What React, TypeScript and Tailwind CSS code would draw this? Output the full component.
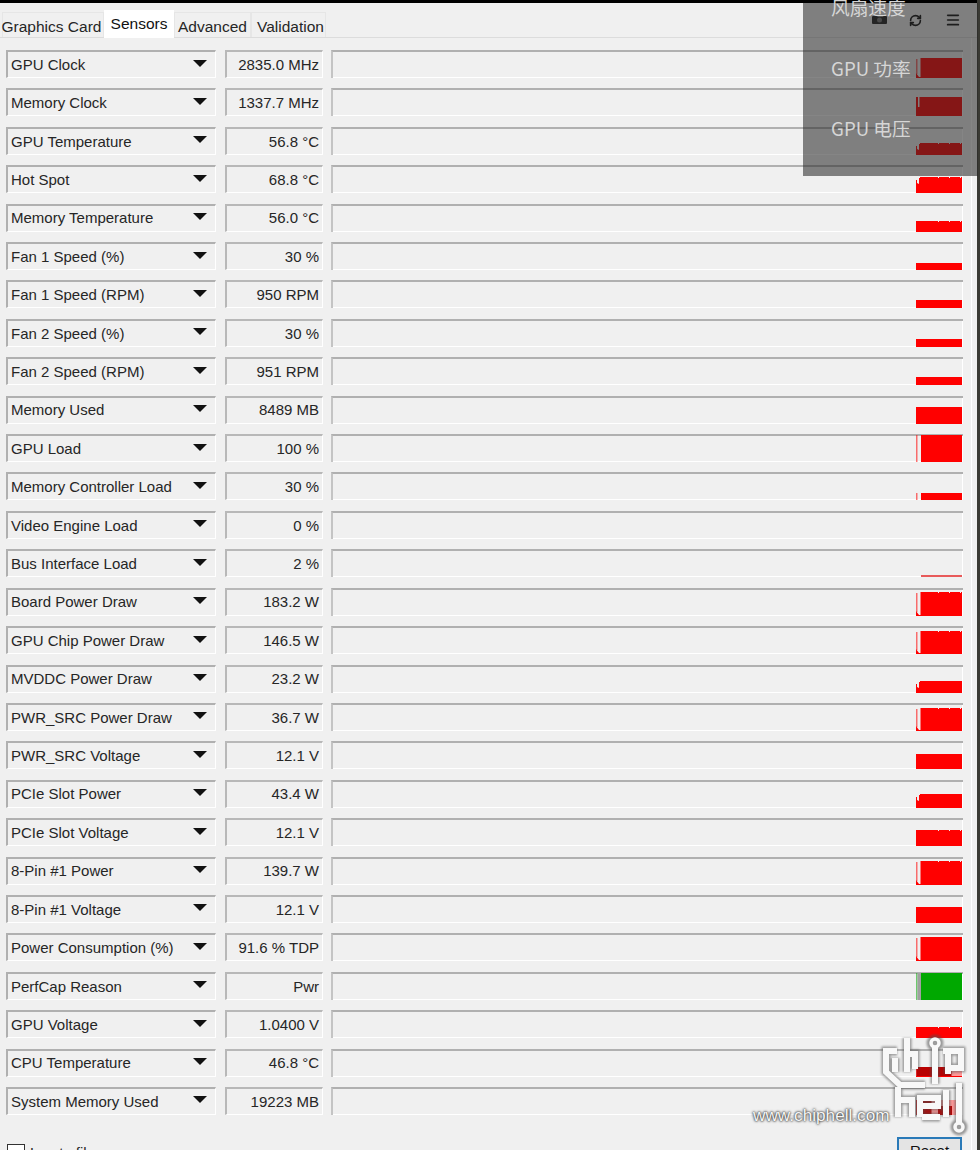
import { Menu, RefreshCw } from "lucide-react";

type Sensor = {
  name: string;
  value: string;
  h: number;
  notch?: "spike" | "short" | "gap" | "low";
  ragged?: boolean;
  color?: string;
};

const sensors: Sensor[] = [
  { name: "GPU Clock", value: "2835.0 MHz", h: 20, notch: "spike" },
  { name: "Memory Clock", value: "1337.7 MHz", h: 19, notch: "short" },
  { name: "GPU Temperature", value: "56.8 °C", h: 12, notch: "low", ragged: true },
  { name: "Hot Spot", value: "68.8 °C", h: 16, notch: "low", ragged: true },
  { name: "Memory Temperature", value: "56.0 °C", h: 11, ragged: true },
  { name: "Fan 1 Speed (%)", value: "30 %", h: 7 },
  { name: "Fan 1 Speed (RPM)", value: "950 RPM", h: 8 },
  { name: "Fan 2 Speed (%)", value: "30 %", h: 8 },
  { name: "Fan 2 Speed (RPM)", value: "951 RPM", h: 8 },
  { name: "Memory Used", value: "8489 MB", h: 17 },
  { name: "GPU Load", value: "100 %", h: 27, notch: "gap" },
  { name: "Memory Controller Load", value: "30 %", h: 7, notch: "gap" },
  { name: "Video Engine Load", value: "0 %", h: 0 },
  { name: "Bus Interface Load", value: "2 %", h: 2, notch: "gap", color: "#e85a5a" },
  { name: "Board Power Draw", value: "183.2 W", h: 24, notch: "spike", ragged: true },
  { name: "GPU Chip Power Draw", value: "146.5 W", h: 23, notch: "spike", ragged: true },
  { name: "MVDDC Power Draw", value: "23.2 W", h: 12, notch: "low" },
  { name: "PWR_SRC Power Draw", value: "36.7 W", h: 23, notch: "spike", ragged: true },
  { name: "PWR_SRC Voltage", value: "12.1 V", h: 15 },
  { name: "PCIe Slot Power", value: "43.4 W", h: 14, notch: "low" },
  { name: "PCIe Slot Voltage", value: "12.1 V", h: 16, ragged: true },
  { name: "8-Pin #1 Power", value: "139.7 W", h: 24, notch: "spike", ragged: true },
  { name: "8-Pin #1 Voltage", value: "12.1 V", h: 16 },
  { name: "Power Consumption (%)", value: "91.6 % TDP", h: 24, notch: "spike" },
  { name: "PerfCap Reason", value: "Pwr", h: 27, notch: "gap", color: "#00a800" },
  { name: "GPU Voltage", value: "1.0400 V", h: 11, ragged: true },
  { name: "CPU Temperature", value: "46.8 °C", h: 9 },
  { name: "System Memory Used", value: "19223 MB", h: 15 },
];

// top edge of the trace, with a few small nicks when the sensor wobbles
function topEdge(from: number, top: number, ragged?: boolean) {
  let d = "";
  for (let x = from; x < 46; x += 1) {
    const nick = ragged && (x * 7) % 11 === 0 && x > 12 ? 1 : 0;
    d += ` H${x} V${top + nick}`;
  }
  return d + " H46";
}

function Trace({ sensor }: { sensor: Sensor }) {
  const { h, notch, ragged } = sensor;
  const color = sensor.color ?? "#ff0000";
  if (h === 0) return null;
  const top = 27 - h;
  let d = "";
  if (notch === "gap") {
    d = `M5 27 V${top}${topEdge(5, top, ragged)} V27 Z`;
  } else if (notch === "spike") {
    d = `M0 27 V22 L3 26 H4.5 V${top}${topEdge(5, top, ragged)} V27 Z`;
  } else if (notch === "short") {
    d = `M0 27 V${top} H2 V${top + 10} H3.5 V${top}${topEdge(5, top, ragged)} V27 Z`;
  } else if (notch === "low") {
    d = `M0 27 V${top + 3} H1 V${top + 6} L3 ${top + 7} V${top + 1}${topEdge(4, top, ragged)} V27 Z`;
  } else {
    d = `M0 27 V${top}${topEdge(2, top, ragged)} V27 Z`;
  }
  return (
    <svg width="46" height="27" viewBox="0 0 46 27" className="block">
      {notch === "gap" && h > 2 && <rect x="0" y={top} width="1.5" height={h} fill={color} opacity="0.55" />}
      {notch === "gap" && sensor.color === "#00a800" && <rect x="1.5" y={top} width="3.5" height={h} fill="#a0a0a0" />}
      {notch === "spike" && <rect x="0" y={top + 1} width="1.5" height={22 - top} fill={color} opacity="0.55" />}
      <path d={d} fill={color} />
    </svg>
  );
}

function SensorRow({ sensor }: { sensor: Sensor }) {
  return (
    <div className="flex h-[38.42px] items-start pl-[6px]">
      <div className="flex h-[28px] w-[210px] items-center justify-between border-t-2 border-l-2 border-r border-b border-t-[#b0b0b0] border-l-[#b0b0b0] border-r-white border-b-white pl-[3px] pr-[8px]">
        <span className="whitespace-nowrap pt-px">{sensor.name}</span>
        <svg width="14" height="7" viewBox="0 0 14 7" className="mb-[3px] block">
          <polygon points="0,0 14,0 7,7" fill="#111" />
        </svg>
      </div>
      <div className="ml-[9px] flex h-[28px] w-[98px] items-center justify-end border-t-2 border-l-2 border-r border-b border-t-[#b8b8b8] border-l-[#b8b8b8] border-r-white border-b-white pr-[3px]">
        <span className="whitespace-nowrap pt-px">{sensor.value}</span>
      </div>
      <div className="ml-[8px] flex h-[28px] w-[632px] items-end justify-end border-t-2 border-l-2 border-t-[#b0b0b0] border-l-[#c4c4c4]">
        <div className="flex h-[26px] flex-1 items-end justify-end border-b border-r border-b-white border-r-white">
          <div className="-mb-px">
            <Trace sensor={sensor} />
          </div>
        </div>
      </div>
    </div>
  );
}

function Watermark() {
  const strokes = (
    <>
      <path d="M27 21 H16 V42 L30 55 H55" />
      <path d="M25 28 V42" />
      <path d="M37 8 V42 M37 24 H45 V39" />
      <path d="M65 17 V54" />
      <path d="M78 21 V44 M73 21 H91 V38 H81" />
      <path d="M28 57 V87 M28 70 H42 V87" />
      <path d="M50 87 V68 H68 V76 H52 M52 87 H70" />
      <path d="M76 60 V87" />
      <path d="M89 53 V93" />
    </>
  );
  return (
    <>
      <svg width="110" height="110" viewBox="0 0 110 110" className="pointer-events-none absolute left-[870px] top-[1030px]">
        {/* pale and dark bands where the logo lies over the red traces */}
        <rect x="46.5" y="37" width="45.5" height="9" fill="#ffffff" opacity="0.6" />
        <rect x="46.5" y="37" width="35" height="9" fill="#b80000" />
        <rect x="46.5" y="70" width="45.5" height="15" fill="#ffffff" opacity="0.6" />
        <rect x="46.5" y="70" width="15" height="15" fill="#b80000" />
        <rect x="68" y="76" width="14" height="9" fill="#b80000" />
        <g fill="none">
          <g stroke="#4f4f4f" strokeWidth="9" opacity="0.55" className="blur-[1px]">
            {strokes}
            <circle cx="65" cy="13" r="4" />
            <circle cx="89" cy="97" r="4" />
          </g>
          <g stroke="#f8f8f8" strokeWidth="6">
            {strokes}
            <circle cx="65" cy="13" r="4" strokeWidth="3.5" />
            <circle cx="89" cy="97" r="4" strokeWidth="3.5" />
          </g>
        </g>
      </svg>
      <span className="pointer-events-none absolute left-[753px] top-[1105px] whitespace-nowrap text-[17.2px] leading-5 text-[#f6f6f6] [text-shadow:0_0_2px_#222,0_0_3px_#333]">
        www.chiphell.com
      </span>
    </>
  );
}

export default function App() {
  return (
    <div className="relative h-[1150px] w-[980px] overflow-hidden bg-[#f0f0f0] font-['Liberation_Sans',sans-serif] text-[15px] text-[#262626]">
      <div className="h-[3px] bg-black" />

      <div className="flex h-[35px] items-end border-b border-[#dcdcdc] pl-[2px] text-[15.5px]">
        <div className="flex h-[25px] w-[102px] items-center justify-center whitespace-nowrap border border-b-0 border-[#e6e6e6] pr-[3px] pt-[3px]">Graphics Card</div>
        <div className="-mb-px flex h-[28px] w-[70px] items-center justify-center bg-white text-[#111]">Sensors</div>
        <div className="flex h-[25px] w-[77px] items-center justify-center border border-b-0 border-[#e6e6e6] pt-[3px]">Advanced</div>
        <div className="flex h-[25px] w-[75px] items-center justify-center border border-b-0 border-[#e6e6e6] pl-[4px] pt-[3px]">Validation</div>
        <div className="ml-auto mb-[9px] flex items-center text-[#111]">
          <svg width="15" height="8" viewBox="0 0 15 8" className="mr-[22px] block">
            <rect width="15" height="8" rx="1" fill="#222" />
            <circle cx="7.5" cy="4" r="2.5" fill="#777" />
          </svg>
          <RefreshCw size={13} strokeWidth={3} className="mr-[23px]" />
          <Menu size={16} strokeWidth={2.5} className="mr-[19px]" />
        </div>
      </div>

      <div className="pt-[12px]">
        {sensors.map((sensor) => (
          <SensorRow key={sensor.name} sensor={sensor} />
        ))}
      </div>

      <div className="flex items-start justify-between pl-[7px] pr-[18px] pt-[12px]">
        <div className="mt-[7px] flex items-center">
          <div className="h-[18px] w-[18px] border border-[#333] bg-white" />
          <span className="ml-[5px] leading-[18px]">Log to file</span>
        </div>
        <div className="flex h-[28px] w-[65px] items-center justify-center border-2 border-[#2a7ab8] bg-[#e4e4e4] text-[#111]">Reset</div>
      </div>

      {/* panel edge and the desktop behind the window */}
      <div className="absolute bottom-0 right-[8px] top-[38px] w-px bg-white" />
      <div className="absolute bottom-0 right-0 top-0 w-[3px] bg-[#3a3a34]" />

      {/* floating monitor panel over the window */}
      <div className="absolute left-[803px] top-[3px] h-[173px] w-[175px] bg-[#272727]/[0.565] font-['Noto_Sans_CJK_SC',sans-serif] text-[18.7px] text-[#d6d6d6]">
        <div className="-mt-[9px] pl-[28px] leading-[26px]">风扇速度</div>
        <div className="mt-[35px] pl-[28px] leading-[26px]">GPU 功率</div>
        <div className="mt-[34px] pl-[28px] leading-[26px]">GPU 电压</div>
      </div>

      <Watermark />
    </div>
  );
}
